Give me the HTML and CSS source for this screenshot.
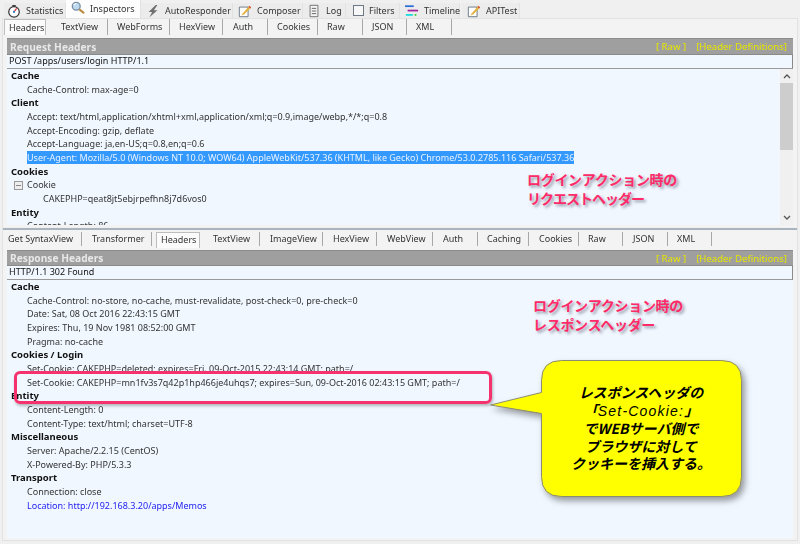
FILE: index.html
```html
<!DOCTYPE html>
<html>
  <head>
    <meta charset="utf-8" />
    <title>Inspectors</title>
    <link rel="stylesheet" href="styles.css">
  </head>
  <body>
    <div class="window">
      <!-- main tabs -->
      <nav class="main-tabs">
        <div class="main-tab tab-statistics">
          <svg class="icon" viewBox="0 0 16 16"><circle cx="8" cy="9" r="6" fill="#fff" stroke="#333" stroke-width="1.4"/><path d="M8 9 11 5" stroke="#d33" stroke-width="1.5"/><path d="M6 2h4" stroke="#333" stroke-width="1.6"/><circle cx="8" cy="9" r="1.2" fill="#2a7fc9"/></svg>
          Statistics
        </div>
        <div class="main-tab tab-inspectors active">
          <svg class="icon" viewBox="0 0 16 16"><circle cx="6" cy="6" r="4.5" fill="#bcd9f2" stroke="#7a8ea3" stroke-width="1.5"/><path d="M9.5 9.5 15 14" stroke="#b98a3c" stroke-width="2.4"/><path d="M3 4.5 6 2.8" stroke="#fff" stroke-width="1.2"/></svg>
          Inspectors
        </div>
        <div class="main-tab tab-auto">
          <svg class="icon" viewBox="0 0 16 16"><path d="M11 1 3 9h4l-3 6 9-8H9l4-6z" fill="#6e6e6e"/></svg>
          AutoResponder
        </div>
        <div class="main-tab tab-composer">
          <svg class="icon" viewBox="0 0 16 16"><path d="M1.500 3.500h10v11h-10z" fill="#fff" stroke="#5f6f7f"/><path d="M5 11 13 2l2 2-8 8-3 1z" fill="#e3b23c"/><path d="M13 2l2 2-1 1-2-2z" fill="#d64a3a"/></svg>
          Composer
        </div>
        <div class="main-tab tab-log">
          <svg class="icon" viewBox="0 0 16 16"><path d="M3.500 1.500h9v13h-9z" fill="#f4f4f4" stroke="#666"/><path d="M5.500 5h5M5.500 8h5M5.500 11h5" stroke="#555"/></svg>
          Log
        </div>
        <div class="main-tab tab-filters">
          <span class="checkbox"></span>
          Filters
        </div>
        <div class="main-tab tab-timeline">
          <svg class="icon" viewBox="0 0 16 16"><path d="M0 2.500h10" stroke="#2a6fd6" stroke-width="2"/><path d="M3 7.500h12" stroke="#a020a0" stroke-width="2"/><path d="M1 12.500h8" stroke="#18d8e0" stroke-width="2"/><path d="M11 12.500h2" stroke="#30d030" stroke-width="2"/></svg>
          Timeline
        </div>
        <div class="main-tab tab-api">
          <svg class="icon" viewBox="0 0 16 16"><path d="M1.500 3.500h10v11h-10z" fill="#fff" stroke="#5f6f7f"/><path d="M5 11 13 2l2 2-8 8-3 1z" fill="#e3b23c"/><path d="M13 2l2 2-1 1-2-2z" fill="#d64a3a"/></svg>
          APITest
        </div>
      </nav>

      <div class="panel">
        <!-- request -->
        <section class="pane request">
          <div class="sub-tabs sub-tabs-upper">
            <div class="sub-tab selected w-headers">Headers</div>
            <div class="sub-tab w-textview">TextView</div>
            <div class="sub-tab w-webforms">WebForms</div>
            <div class="sub-tab w-hexview">HexView</div>
            <div class="sub-tab w-auth">Auth</div>
            <div class="sub-tab w-cookies">Cookies</div>
            <div class="sub-tab w-raw">Raw</div>
            <div class="sub-tab w-json">JSON</div>
            <div class="sub-tab w-xml">XML</div>
          </div>
          <div class="title-bar title-bar-upper">
            <span>Request Headers</span>
            <span class="title-links"><a>[ Raw ]</a><a>[Header Definitions]</a></span>
          </div>
          <div class="first-line">POST /apps/users/login HTTP/1.1</div>
          <div class="tree-wrap tree-wrap-request">
            <div class="tree">
              <div class="group">Cache</div>
              <div class="row">Cache-Control: max-age=0</div>
              <div class="group">Client</div>
              <div class="row">Accept: text/html,application/xhtml+xml,application/xml;q=0.9,image/webp,*/*;q=0.8</div>
              <div class="row">Accept-Encoding: gzip, deflate</div>
              <div class="row">Accept-Language: ja,en-US;q=0.8,en;q=0.6</div>
              <div class="row"><span class="picked">User-Agent: Mozilla/5.0 (Windows NT 10.0; WOW64) AppleWebKit/537.36 (KHTML, like Gecko) Chrome/53.0.2785.116 Safari/537.36</span></div>
              <div class="group">Cookies</div>
              <div class="row has-toggle"><span class="toggle"></span>Cookie</div>
              <div class="row deep">CAKEPHP=qeat8jt5ebjrpefhn8j7d6vos0</div>
              <div class="group">Entity</div>
              <div class="row">Content-Length: 86</div>
            </div>
            <div class="scrollbar">
              <svg class="arrow" viewBox="0 0 8 5"><path d="M1 4 4 1l3 3" fill="none" stroke="#555" stroke-width="1.300"/></svg>
              <div class="thumb"></div>
              <svg class="arrow arrow-down" viewBox="0 0 8 5"><path d="M1 1l3 3 3-3" fill="none" stroke="#555" stroke-width="1.300"/></svg>
            </div>
          </div>
        </section>

        <div class="splitter"></div>

        <!-- response -->
        <section class="pane response">
          <div class="sub-tabs">
            <div class="sub-tab w-syntax">Get SyntaxView</div>
            <div class="sub-tab w-transformer">Transformer</div>
            <div class="sub-tab selected w-headers2">Headers</div>
            <div class="sub-tab w-textview2">TextView</div>
            <div class="sub-tab w-imageview">ImageView</div>
            <div class="sub-tab w-hexview2">HexView</div>
            <div class="sub-tab w-webview">WebView</div>
            <div class="sub-tab w-auth2">Auth</div>
            <div class="sub-tab w-caching">Caching</div>
            <div class="sub-tab w-cookies2">Cookies</div>
            <div class="sub-tab w-raw2">Raw</div>
            <div class="sub-tab w-json2">JSON</div>
            <div class="sub-tab w-xml2">XML</div>
          </div>
          <div class="title-bar">
            <span>Response Headers</span>
            <span class="title-links"><a>[ Raw ]</a><a>[Header Definitions]</a></span>
          </div>
          <div class="first-line">HTTP/1.1 302 Found</div>
          <div class="tree-wrap tree-wrap-response">
            <div class="tree">
              <div class="group">Cache</div>
              <div class="row">Cache-Control: no-store, no-cache, must-revalidate, post-check=0, pre-check=0</div>
              <div class="row">Date: Sat, 08 Oct 2016 22:43:15 GMT</div>
              <div class="row">Expires: Thu, 19 Nov 1981 08:52:00 GMT</div>
              <div class="row">Pragma: no-cache</div>
              <div class="group">Cookies / Login</div>
              <div class="row">Set-Cookie: CAKEPHP=deleted; expires=Fri, 09-Oct-2015 22:43:14 GMT; path=/</div>
              <div class="row">Set-Cookie: CAKEPHP=mn1fv3s7q42p1hp466je4uhqs7; expires=Sun, 09-Oct-2016 02:43:15 GMT; path=/</div>
              <div class="group">Entity</div>
              <div class="row">Content-Length: 0</div>
              <div class="row">Content-Type: text/html; charset=UTF-8</div>
              <div class="group">Miscellaneous</div>
              <div class="row">Server: Apache/2.2.15 (CentOS)</div>
              <div class="row">X-Powered-By: PHP/5.3.3</div>
              <div class="group">Transport</div>
              <div class="row">Connection: close</div>
              <div class="row link">Location: http://192.168.3.20/apps/Memos</div>
            </div>
          </div>
        </section>
      </div>
    </div>

    <!-- annotations pasted over the screenshot -->
    <div class="note note-request">ログインアクション時の<br><span class="note-tight">リクエストヘッダー</span></div>
    <div class="note note-response">ログインアクション時の<br>レスポンスヘッダー</div>
    <div class="mark"></div>
    <svg class="callout" viewBox="0 0 320 160" width="320" height="160">
      <path d="M61.500 30.500Q61.500 10.500 81.500 10.500H241.500Q261.500 10.500 261.500 30.500V126.500Q261.500 146.500 241.500 146.500H81.500Q61.500 146.500 61.500 126.500V63.500L10.500 55 61.500 42.500z" fill="#ffff00" stroke="#8c8c70"/>
    </svg>
    <div class="callout-text">レスポンスヘッダの<br>「<span class="callout-latin">Set-Cookie:</span>」<br>でWEBサーバ側で<br>ブラウザに対して<br>クッキーを挿入する。</div>
  </body>
</html>
```

FILE: styles.css
```css
html,
body {
  margin: 0;
  padding: 0;
  width: 800px;
  height: 544px;
  overflow: hidden;
  background: #f0f0f0;
}

body {
  position: relative;
  font-family: "Noto Sans", "Liberation Sans", sans-serif;
  font-size: 9px;
  color: #222;
}

.window {
  filter: blur(0.3px);
}

/* Main tabs */

.main-tabs {
  display: flex;
  height: 18px;
  padding-left: 4px;
}

.main-tab {
  display: flex;
  align-items: center;
  box-sizing: border-box;
  height: 15px;
  margin-top: 3px;
  background: #ececec;
  border-right: 1px solid #e2e2e2;
  color: #333;
  white-space: nowrap;
}

.main-tab.active {
  height: 18px;
  margin-top: 0;
  padding-bottom: 2px;
  background: #fdfdfd;
}

.icon {
  width: 14px;
  height: 14px;
  margin-right: 5px;
  flex: none;
}

.checkbox {
  box-sizing: border-box;
  width: 11px;
  height: 11px;
  margin-right: 5px;
  background: #f7f7f7;
  border: 1px solid #6d7a86;
  flex: none;
}

.tab-statistics { width: 62px; padding-left: 3px; }
.tab-inspectors { width: 75px; padding-left: 5px; }
.tab-auto { width: 92px; padding-left: 5px; }
.tab-composer { width: 70px; padding-left: 5px; }
.tab-log { width: 43px; padding-left: 4px; }
.tab-filters { width: 54px; padding-left: 7px; }
.tab-timeline { width: 60px; padding-left: 5px; }
.tab-api { width: 58px; margin-left: 2px; padding-left: 5px; }

/* Panel */

.panel {
  box-sizing: border-box;
  width: 796px;
  height: 523px;
  margin-left: 2px;
  padding: 0 1px;
  background: #f3f3f3;
  border: 1px solid #e2e2e2;
}

.sub-tabs {
  display: flex;
  height: 20px;
}

.sub-tabs-upper {
  height: 19px;
}

.sub-tab {
  box-sizing: border-box;
  height: 16px;
  padding-left: 9px;
  line-height: 15px;
  border-right: 1px solid #a8a8a8;
  white-space: nowrap;
  color: #333;
}

.sub-tabs:not(.sub-tabs-upper) .sub-tab {
  margin-top: 2px;
  height: 14px;
  line-height: 13px;
}

.sub-tab.selected,
.sub-tabs:not(.sub-tabs-upper) .sub-tab.selected {
  height: 16px;
  background: #fbfbfb;
  border: solid #bdbdbd;
  border-width: 1px 1px 0 1px;
  padding-left: 4px;
}

.w-headers { width: 42px; margin-right: 5px; }
.w-textview { width: 57px; padding-left: 10px; }
.w-webforms { width: 62px; }
.w-hexview { width: 53px; }
.w-auth { width: 45px; padding-left: 10px; }
.w-cookies { width: 50px; }
.w-raw { width: 45px; }
.w-json { width: 44px; }
.w-xml { width: 45px; }

.w-syntax { width: 78px; padding-left: 4px; }
.w-transformer { width: 70px; padding-left: 10px; }
.w-headers2 { width: 44px; margin: 0 4px; padding-left: 6px; }
.w-textview2 { width: 56px; }
.w-imageview { width: 63px; padding-left: 10px; }
.w-hexview2 { width: 54px; padding-left: 10px; }
.w-webview { width: 56px; padding-left: 10px; }
.w-auth2 { width: 45px; padding-left: 10px; }
.w-caching { width: 51px; }
.w-cookies2 { width: 50px; padding-left: 10px; }
.w-raw2 { width: 44px; }
.w-json2 { width: 45px; padding-left: 10px; }
.w-xml2 { width: 44px; }

.title-bar {
  display: flex;
  justify-content: space-between;
  align-items: center;
  box-sizing: border-box;
  height: 15px;
  margin: 0 3px;
  padding: 0 6px 0 3px;
  background: #9f9f9f;
  border-top: 1px solid #8c8c8c;
  font-size: 10.2px;
  font-weight: bold;
  color: #e8e8e8;
}

.title-bar-upper {
  height: 16px;
}

.title-links {
  display: flex;
  gap: 10px;
  font-size: 9.6px;
  font-weight: normal;
  color: #e6e600;
}

.first-line {
  box-sizing: border-box;
  height: 15px;
  margin: 0 3px;
  padding-left: 2px;
  line-height: 12px;
  background: #f0f7ff;
  border: solid #8a8a8a;
  border-width: 1px 1px 1px 0;
  border-bottom-color: #999;
  color: #111;
}

.tree-wrap {
  display: flex;
  margin: 0 3px;
  background: #f0f7ff;
  overflow: hidden;
}

.tree-wrap-request { height: 156px; }
.tree-wrap-response { height: 258px; }

.tree {
  flex: 1;
  padding-left: 4px;
  overflow: hidden;
}

.group,
.row {
  height: 13.68px;
  line-height: 13.68px;
  white-space: nowrap;
}

.group {
  font-size: 9.5px;
  font-weight: bold;
  color: #111;
}

.row {
  padding-left: 16px;
  color: #333;
}

.row.deep {
  padding-left: 32px;
}

.row.link {
  color: #1c1cf0;
}

.has-toggle {
  display: flex;
  align-items: center;
  padding-left: 3px;
}

.toggle {
  box-sizing: border-box;
  width: 9px;
  height: 9px;
  margin-right: 4px;
  background: linear-gradient(#888, #888) center / 5px 1px no-repeat #eee;
  border: 1px solid #999;
}

.picked {
  display: inline-block;
  height: 13px;
  line-height: 13px;
  background: #3399ff;
  color: #e8f2ff;
}

.scrollbar {
  display: flex;
  flex-direction: column;
  align-items: center;
  width: 13px;
  background: #f0f0f0;
}

.arrow {
  flex: none;
  width: 8px;
  height: 5px;
  margin: 5px 0 4px;
}

.arrow-down {
  margin: auto 0 5px;
}

.thumb {
  width: 13px;
  height: 67px;
  background: #cdcdcd;
}

.splitter {
  height: 3px;
  margin: 2px -1px 0;
  background: linear-gradient(#f0f0f0 30%, #a9b4bf 30%);
}

/* Annotations */

.note {
  position: absolute;
  font-family: "Noto Sans CJK JP", sans-serif;
  font-size: 14px;
  font-weight: 700;
  line-height: 19px;
  letter-spacing: -0.3px;
  color: #ff2a68;
  text-shadow: 2px 2px 3px rgba(70, 70, 90, 0.55);
}

.note-tight {
  letter-spacing: -1px;
}

.note-request {
  left: 527px;
  top: 170px;
}

.note-response {
  left: 533px;
  top: 296px;
}

.mark {
  position: absolute;
  left: 14px;
  top: 371px;
  box-sizing: border-box;
  width: 478px;
  height: 33px;
  border: 3px solid #f5326e;
  border-radius: 6px;
  box-shadow: 1px 2px 3px rgba(60, 60, 60, 0.35);
}

.callout {
  position: absolute;
  left: 480px;
  top: 350px;
  filter: drop-shadow(3px 4px 3px rgba(60, 60, 60, 0.5));
}

.callout-text {
  position: absolute;
  left: 541px;
  top: 384px;
  width: 200px;
  font-family: "Noto Sans CJK JP", sans-serif;
  font-size: 14px;
  font-style: italic;
  font-weight: 700;
  line-height: 17.500px;
  text-align: center;
  color: #000;
}

.callout-latin {
  font-family: "Liberation Sans", sans-serif;
  font-weight: 400;
  letter-spacing: 1.2px;
}
```
